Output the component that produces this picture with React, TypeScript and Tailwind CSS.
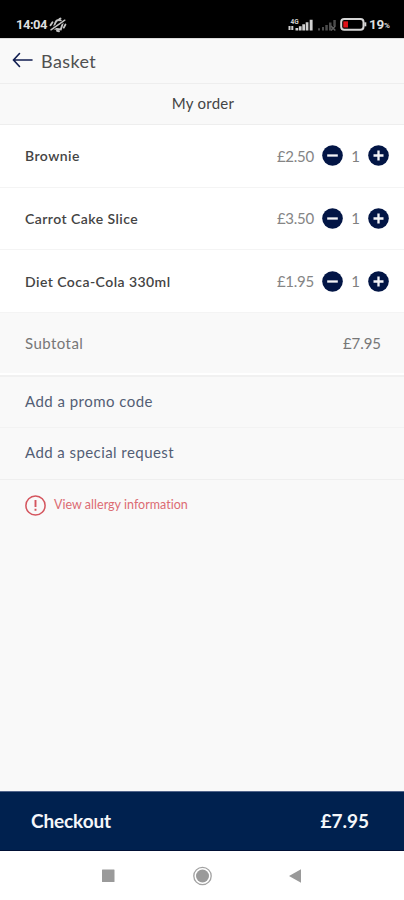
const items = [
  { name: 'Brownie', price: '£2.50' },
  { name: 'Carrot Cake Slice', price: '£3.50' },
  { name: 'Diet Coca-Cola 330ml', price: '£1.95' },
];

function MutedBell() {
  return (
    <svg width="18" height="16" viewBox="0 0 18 16" fill="none" stroke="#c4c4c4" strokeWidth="1.9" strokeLinecap="round">
      <path d="M4.500 11.500 6.300 5.800Q8 2.100 11.300 3.400Q14.500 4.700 13.200 8L11.800 12.400Z" />
      <path d="M1.500 8.200 3.500 5.200M14.800 10.600 16.400 7.600M8 13.800 10 14.200M10.500 2 11.500 1.600" />
      <path d="M2 12.800 15.800 3.200" stroke="#000" strokeWidth="3" />
      <path d="M2 12.800 15.800 3.200" strokeWidth="1.500" />
    </svg>
  );
}

function Signal() {
  return (
    <svg width="26" height="14" viewBox="0 0 26 14" fill="#d0d0d0">
      <text x="2.500" y="5.500" fontSize="6.500" fontWeight="700" fontFamily="Roboto, sans-serif">4G</text>
      <path d="M.5 8h2v4H.5zM3.300 8h2v4h-2zM7.500 10h2.700v2.500H7.500zM10.900 8.200h2.700v4.300h-2.700zM14.300 6.200H17v6.300h-2.700zM17.700 4.200h2.700v8.300h-2.700zM21.700 1.800h2.900v10.700h-2.900z" />
    </svg>
  );
}

function NoSignal() {
  return (
    <svg width="20" height="14" viewBox="0 0 20 14" fill="#4c4c4c">
      <path d="M1 10.300h2v2.200H1zM5 9h2v3.500H5zM8.300 7h2.500v5.500H8.300zM12 4.500h2.500v8H12zM16.300 2h2.500v6h-2.500z" />
      <path d="m14 8 4.300 4.500m0-4.500L14 12.500" stroke="#606060" strokeWidth="1.500" />
    </svg>
  );
}

function Battery() {
  return (
    <svg width="27" height="13" viewBox="0 0 27 13">
      <rect x="1.200" y="1" width="22.300" height="10.800" rx="3" fill="none" stroke="#d6d6d6" strokeWidth="2" />
      <rect x="3.300" y="3.300" width="4.700" height="6.200" fill="#df1018" />
      <path d="M25.300 4.300v4" stroke="#d6d6d6" strokeWidth="2" />
    </svg>
  );
}

function RoundButton({ plus }: { plus?: boolean }) {
  return (
    <button type="button" aria-label={plus ? 'Add one' : 'Remove one'} className="size-[21px] shrink-0">
      <svg width="21" height="21" viewBox="0 0 21 21">
        <circle cx="10.500" cy="10.500" r="10.300" fill="#021545" />
        <path d={plus ? 'M5.500 10.500h10M10.500 5.500v10' : 'M5.200 10.500h10.600'} stroke="#f4f4f7" strokeWidth="2.300" />
      </svg>
    </button>
  );
}

export default function App() {
  return (
    <div className="flex h-[900px] w-[404px] flex-col overflow-hidden bg-[#f9f9f9] font-[Lato,sans-serif] whitespace-nowrap">
      <div className="flex h-[38px] shrink-0 items-center bg-black pt-[11px] pl-4 font-[Roboto,sans-serif] text-[#dedede]">
        <span className="w-[33px] text-[13px] font-bold tracking-[-0.500px]">14:04</span>
        <MutedBell />
        <div className="ml-[221px] flex items-center">
          <Signal />
          <div className="ml-[3px] flex"><NoSignal /></div>
          <div className="ml-[3px] flex"><Battery /></div>
          <span className="ml-[2px] text-[13.500px] font-bold tracking-[-0.200px]">19</span>
          <span className="mt-[3px] text-[8px] font-bold">%</span>
        </div>
      </div>

      <header className="flex h-[46px] shrink-0 items-center border-t border-b border-t-[#dcdcdc] border-b-[#eeeeee] pl-3">
        <svg width="22" height="18" viewBox="0 0 22 18" fill="none" stroke="#101d50" strokeWidth="1.600" strokeLinecap="round">
          <path d="M1.500 8H20M7.500 1.500 1.500 8 7.500 14.500" />
        </svg>
        <h1 className="ml-[7px] text-[18px] tracking-[0.400px] text-[#505050]">Basket</h1>
      </header>

      <h2 className="flex h-[41px] shrink-0 items-center justify-center border-b border-[#eeeeee] pb-0.5 pl-0.5 text-[15px] tracking-[0.250px] text-[#444444]">My order</h2>

      <div className="flex h-[188px] shrink-0 flex-col bg-white">
        {items.map((item) => (
          <div key={item.name} className="flex flex-1 items-center border-b border-[#f4f4f4] pr-[15px] pl-[25px]">
            <span className="text-[14px] font-semibold tracking-[0.450px] text-[#444444]">{item.name}</span>
            <span className="mr-2 ml-auto text-[15px] tracking-[-0.250px] text-[#858585]">{item.price}</span>
            <RoundButton />
            <span className="w-[25px] text-center text-[15px] text-[#808080]">1</span>
            <RoundButton plus />
          </div>
        ))}
      </div>

      <div className="flex h-[60px] shrink-0 items-center justify-between pr-[23px] pl-[25px] text-[15px] text-[#777777]">
        <span className="tracking-[0.450px]">Subtotal</span>
        <span className="tracking-[-0.050px]">£7.95</span>
      </div>
      <div className="h-[4px] shrink-0 border-t-2 border-b-2 border-t-white border-b-[#f1f1f1]" />
      <div className="flex h-[51px] shrink-0 items-center border-b border-[#f3f3f3] pb-0.5 pl-[25px] text-[15px] text-[#535e75]">
        <span className="tracking-[0.460px]">Add a promo code</span>
      </div>
      <div className="flex h-[52px] shrink-0 items-center border-b border-[#efefef] pb-0.5 pl-[25px] text-[15px] text-[#535e75]">
        <span className="tracking-[0.430px]">Add a special request</span>
      </div>
      <div className="flex h-[51px] shrink-0 items-center pl-[25px] text-[#dc6b73]">
        <svg width="21" height="21" viewBox="0 0 21 21" fill="none" stroke="#d4555e" strokeWidth="1.500">
          <circle cx="10.500" cy="10.500" r="9.600" />
          <path d="M10.500 5v7M10.500 13.800v2" strokeWidth="1.900" />
        </svg>
        <span className="ml-2 text-[12.500px] tracking-[0.020px]">View allergy information</span>
      </div>

      <div className="mt-auto flex h-[60px] shrink-0 items-center justify-between border-t border-b border-t-[#52658b] border-b-[#001035] bg-[#00214f] pr-[35px] pl-[31px] text-[19px] font-bold text-[#f5f7fa]">
        <span className="tracking-[-0.120px]">Checkout</span>
        <span>£7.95</span>
      </div>
      <nav className="flex h-[49px] shrink-0 items-center bg-white pl-[102px]">
        <svg width="202" height="22" viewBox="0 0 202 22" fill="#9a9a9a">
          <rect x="0" y="4.500" width="12.500" height="12.500" rx="0.500" />
          <circle cx="100.500" cy="11" r="6.500" />
          <circle cx="100.500" cy="11" r="8.700" fill="none" stroke="#a2a2a2" strokeWidth="1.300" />
          <path d="M187 11 199 4.200V17.800Z" />
        </svg>
      </nav>
    </div>
  );
}
